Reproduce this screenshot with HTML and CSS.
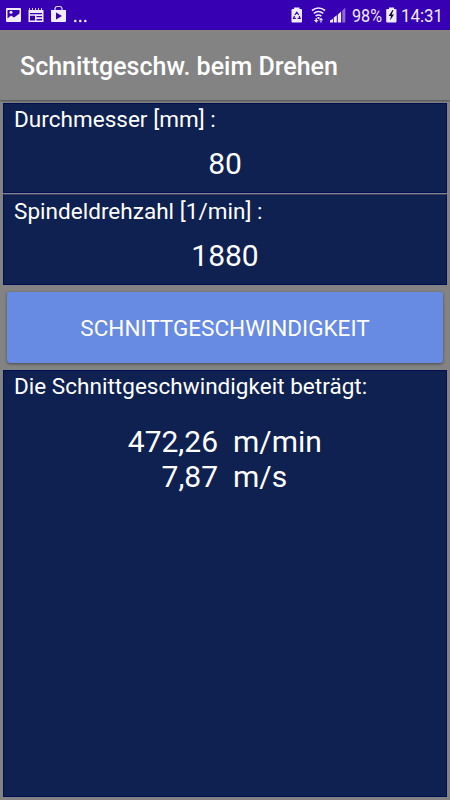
FILE: index.html
```html
<!DOCTYPE html>
<html lang="de">
<head>
<meta charset="utf-8">
<title>Schnittgeschw. beim Drehen</title>
<link rel="stylesheet" href="styles.css">
</head>
<body>
<div class="status">
  <svg class="icons-left" width="90" height="30" viewBox="0 0 90 30" fill="#f1ebfc">
    <path fill-rule="evenodd" d="M7 8h13q1 0 1 1v12q0 1-1 1H7q-1 0-1-1V9q0-1 1-1zM7.500 10v8.500l3.500-3 3 2 5.500-4V10z"/>
    <circle cx="11" cy="12.300" r="1.500"/>
    <path fill-rule="evenodd" d="M28.500 10h15V22h-15zM30 13v1.200h12V13zM30 15.700v4.800h5v-4.800zM36.500 16v1.200h5.500V16zM36.500 19v1.500h5.500V19z"/>
    <path d="M29.500 8v2.500M32.500 8v2.500M35.500 8v2.500M38.500 8v2.500M41.500 8v2.500" stroke="#d9caf7" stroke-width="1"/>
    <path fill-rule="evenodd" d="M51 10h15v11q0 1-1 1H52q-1 0-1-1zM56 12.500v7l6-3.500z"/>
    <path d="M55 10V8.500Q55.500 6.500 57 6.500h3Q61.500 6.500 62 8.500V10" fill="none" stroke="#e0d5fa" stroke-width="1.200"/>
    <circle cx="75.300" cy="21" r="1.300"/><circle cx="80.300" cy="21" r="1.300"/><circle cx="85.300" cy="21" r="1.300"/>
  </svg>
  <svg class="icons-right" width="58" height="30" viewBox="290 0 58 30" fill="#f1ebfc">
    <path d="M294 7.500h5.500V9h1.500q1 0 1 1v11.500q0 1-1 1h-8.500q-1 0-1-1V10q0-1 1-1h1.500z"/>
    <path d="M294.800 15l2-2.800 2 2.800M299.200 16l.9 2.300h-2.500M295.900 18.300h-2.400l1-2.300" fill="none" stroke="#3b00ae" stroke-width="1.200"/>
    <path d="M312 10.500q6.500-5 13 0M313.800 13.300q4.700-3.600 9.400 0M315.700 16q2.800-2 5.600 0" fill="none" stroke="#f1ebfc" stroke-width="1.700"/>
    <path d="M317.500 17h2v2h-2zM314 20h4.400l-2.200 2.700zM318.800 20.300h4.400l-2.200-2.600zM315.600 18h1.200v2.500h-1.200zM320.400 20h1.200v2.500h-1.200z"/>
    <path d="M330 22.500v-2l3-1.700v3.700zM333.800 22.500v-5l3-2.200v7.200zM337.800 22.500v-8l3.300-3v11z"/>
    <path d="M342.300 22.500V10.500l3-2.700v14.700z" fill="#8f6bd2"/>
  </svg>
  <span class="percent">98%</span>
  <svg class="battery" width="12" height="30" viewBox="386 0 12 30">
    <path d="M389 7.500h5V9h1.500q1 0 1 1v11.500q0 1-1 1h-8.300q-1 0-1-1V10q0-1 1-1h1.800z" fill="#f1ebfc"/>
    <path d="M392.500 10l-3.800 6h2.300l-1 4.500 4-6h-2.300l1.800-4.500z" fill="#170830"/>
  </svg>
  <span class="clock">14:31</span>
</div>
<header class="appbar"><h1>Schnittgeschw. beim Drehen</h1></header>
<main>
  <section class="field"><div class="label">Durchmesser [mm] :</div><div class="value">80</div></section>
  <section class="field"><div class="label">Spindeldrehzahl [1/min] :</div><div class="value">1880</div></section>
  <button class="action">SCHNITTGESCHWINDIGKEIT</button>
  <section class="result">
    <div class="label">Die Schnittgeschwindigkeit beträgt:</div>
    <div class="rows">
      <span class="num">472,26</span><span>m/min</span>
      <span class="num">7,87</span><span>m/s</span>
    </div>
  </section>
</main>
</body>
</html>
```
FILE: styles.css
```css
* { box-sizing: border-box; }
body {
  margin: 0;
  width: 450px;
  height: 800px;
  overflow: hidden;
  display: flex;
  flex-direction: column;
  background: #838383;
  color: #fff;
  font-family: Roboto, sans-serif;
}
.status {
  flex: none;
  display: flex;
  height: 30px;
  background: #3700b3;
  color: #f1ebfc;
  font-size: 19px;
  line-height: 31px;
}
.status svg { flex: none; display: block; }
.icons-right { margin-left: 200px; }
.percent, .clock {
  flex: none;
  white-space: nowrap;
  transform-origin: 0 50%;
}
.percent { width: 34px; margin-left: 4px; transform: scaleX(.85); }
.clock { width: 48px; margin-left: 3px; transform: scaleX(.89); }
.appbar {
  flex: none;
  height: 70px;
  padding-left: 20px;
  border-top: 1px solid #858776;
  background: #838383;
  box-shadow: 0 1px 2px rgba(0, 0, 0, .4);
}
h1 {
  margin: 0;
  font-size: 25px;
  font-weight: 500;
  line-height: 72px;
}
main {
  flex: 1;
  display: flex;
  flex-direction: column;
  padding: 3px 3px 3px;
}
.field, .result {
  background: #0f2150;
  border: 1px solid #000f50;
}
.field { height: 90px; }
.field + .field {
  height: 91px;
  margin-top: 1px;
  padding-top: 1px;
  border-top-color: #39415c;
}
.field:first-child { box-shadow: 0 1px #858391; }
.label {
  padding-left: 10px;
  font-size: 22.5px;
  line-height: 30px;
  letter-spacing: .03px;
}
.value {
  margin-top: 12px;
  font-size: 30px;
  line-height: 36px;
  text-align: center;
}
.action {
  flex: none;
  height: 71px;
  margin: 7px 4px;
  padding: 0;
  border: 0;
  border-radius: 3px;
  background: #678ae3;
  color: #fff;
  font: 22.5px Roboto, sans-serif;
  box-shadow: 0 1px 3px rgba(0, 0, 0, .45);
}
.result { flex: 1; }
.rows {
  display: grid;
  grid-template-columns: 214px auto;
  column-gap: 15px;
  margin-top: 23px;
  font-size: 30px;
  line-height: 35px;
}
.num { text-align: right; }
```
